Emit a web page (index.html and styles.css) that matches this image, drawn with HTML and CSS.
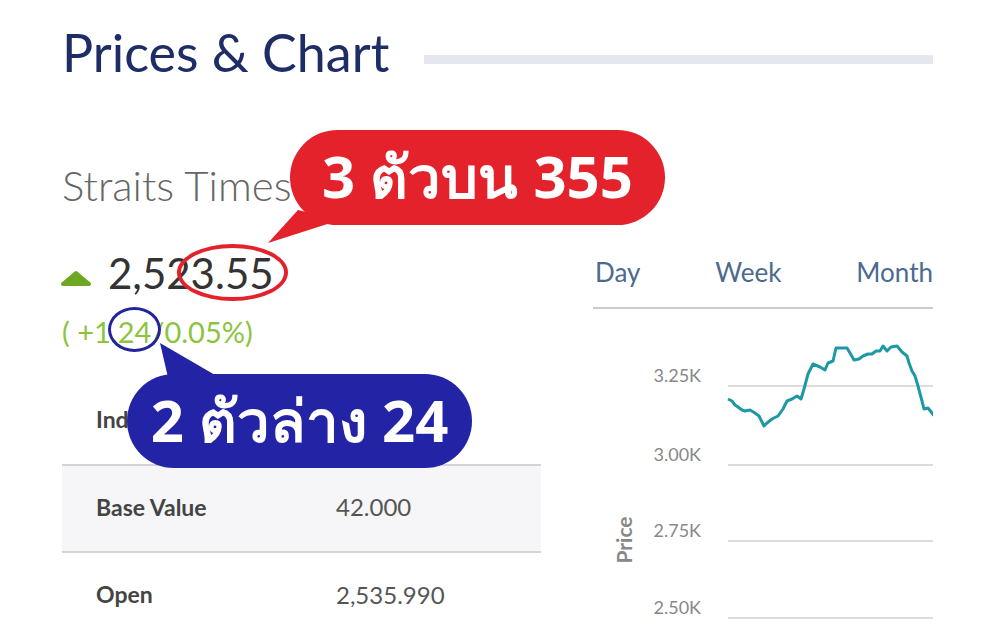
FILE: index.html
```html
<!DOCTYPE html>
<html lang="en">
<head>
  <meta charset="UTF-8">
  <meta name="viewport" content="width=device-width, initial-scale=1.0">
  <title>Prices &amp; Chart</title>
  <link rel="stylesheet" href="styles.css">
</head>
<body>
  <div class="page">
    <div class="title-row">
      <h1>Prices &amp; Chart</h1>
      <span class="rule"></span>
    </div>

    <div class="content">
      <div class="quote">
        <h2 class="index-name">Straits Times Index</h2>
        <div class="price">
          <svg class="up" width="32" height="16" viewBox="0 0 32 16">
            <polygon points="3,14 16,3 29,14" fill="#6ea722" stroke="#6ea722" stroke-width="4" stroke-linejoin="round"/>
          </svg>
          <span>2,523.55</span>
        </div>
        <div class="change">( +1.24/0.05%)</div>

        <table class="stats">
          <tr>
            <th>Index Currency</th>
            <td>SGD</td>
          </tr>
          <tr class="shaded">
            <th>Base Value</th>
            <td>42.000</td>
          </tr>
          <tr>
            <th>Open</th>
            <td>2,535.990</td>
          </tr>
        </table>
      </div>

      <div class="chart-panel">
        <div class="tabs">
          <span>Day</span>
          <span>Week</span>
          <span>Month</span>
        </div>
        <svg class="chart" width="340" height="335" viewBox="0 0 340 335">
          <line x1="135" y1="77" x2="340" y2="77" class="grid"/>
          <line x1="135" y1="156" x2="340" y2="156" class="grid"/>
          <line x1="135" y1="232" x2="340" y2="232" class="grid"/>
          <line x1="135" y1="309" x2="340" y2="309" class="grid"/>
          <text x="108" y="73" class="tick">3.25K</text>
          <text x="108" y="152" class="tick">3.00K</text>
          <text x="108" y="228" class="tick">2.75K</text>
          <text x="108" y="305" class="tick">2.50K</text>
          <text class="axis" transform="translate(39 231) rotate(-90)">Price</text>
          <polyline class="series" points="135,90 139,92 142,96 145,98 149,101 152,102 157,101 162,104 166,107 171,117 174,114 179,110 185,107 190,100 194,92 199,90 204,87 208,90 211,80 215,65 220,55 227,58 232,61 235,54 240,52 243,39 249,39 254,39 257,44 261,51 266,50 270,47 275,45 279,45 283,42 287,42 290,37 294,42 298,38 304,37 309,43 314,47 316,54 319,62 322,67 325,77 329,92 331,100 335,99 339,104 342,108"/>
        </svg>
      </div>
    </div>

    <!-- annotations drawn over the screenshot -->
    <svg class="tails" width="994" height="643" viewBox="0 0 994 643">
      <polygon points="268,243 298,210 340,220" fill="#e3222b"/>
      <polygon points="160,343 170,386 234,386" fill="#2323a6"/>
    </svg>
    <div class="ring ring-red"></div>
    <div class="ring ring-blue"></div>
    <div class="callout callout-red">3 ตัวบน 355</div>
    <div class="callout callout-blue">2 ตัวล่าง 24</div>
  </div>
</body>
</html>
```

FILE: styles.css
```css
* {
  margin: 0;
  padding: 0;
  box-sizing: border-box;
}
body {
  background-color: #fff;
  font-family: Lato, "Open Sans", sans-serif;
}
.page {
  position: relative;
  width: 994px;
  height: 643px;
  overflow: hidden;
  padding: 21px 61px 0 62px;
}
.title-row {
  display: flex;
  align-items: center;
}
.title-row h1 {
  font-size: 52px;
  font-weight: 400;
  line-height: 62px;
  color: #1f2d66;
}
.rule {
  flex: 1;
  height: 9px;
  margin: 14px 0 0 35px;
  background-color: #e5e7ee;
}
.content {
  display: flex;
  gap: 52px;
  margin-top: 74px;
}
.quote {
  width: 479px;
}
.index-name {
  margin-top: 6px;
  font-size: 42px;
  font-weight: 300;
  line-height: 44px;
  color: #666;
  white-space: nowrap;
}
.price {
  display: flex;
  align-items: center;
  gap: 16px;
  margin-top: 42px;
  font-size: 42px;
  line-height: 48px;
  color: #333;
}
.up {
  margin-left: -2px;
  margin-top: 10px;
}
.change {
  margin-top: 19px;
  font-size: 29px;
  line-height: 32px;
  color: #8cc43f;
}
.stats {
  width: 100%;
  margin-top: 30px;
  border-collapse: collapse;
}
.stats tr {
  height: 87px;
  border-bottom: 2px solid #d3d3d8;
}
.stats tr:last-child {
  border-bottom: none;
}
.stats .shaded {
  background-color: #f6f6f8;
}
.stats th {
  width: 274px;
  padding-left: 34px;
  padding-bottom: 4px;
  text-align: left;
  font-size: 23px;
  font-weight: 700;
  color: #444;
}
.stats td {
  padding-bottom: 4px;
  font-size: 24px;
  color: #555;
}
.chart-panel {
  width: 340px;
  margin-top: 98px;
}
.tabs {
  display: flex;
  justify-content: space-between;
  padding: 0 0 0 2px;
  height: 54px;
  border-bottom: 2px solid #c9cbd0;
  font-size: 26px;
  line-height: 34px;
  color: #4b6a8e;
}
.chart {
  display: block;
}
.chart .grid {
  stroke: #dcdcdc;
  stroke-width: 2;
}
.chart .tick {
  font-family: Lato, sans-serif;
  font-size: 18px;
  fill: #888;
  text-anchor: end;
}
.chart .axis {
  font-family: Lato, sans-serif;
  font-size: 21px;
  font-weight: 700;
  fill: #888;
  text-anchor: middle;
}
.chart .series {
  fill: none;
  stroke: #1f98a6;
  stroke-width: 3;
  stroke-linejoin: round;
}
.tails {
  position: absolute;
  left: 0;
  top: 0;
  pointer-events: none;
}
.ring {
  position: absolute;
  border-radius: 50%;
}
.ring-red {
  left: 177px;
  top: 244px;
  width: 111px;
  height: 57px;
  border: 4px solid #e3222b;
}
.ring-blue {
  left: 108px;
  top: 307px;
  width: 53px;
  height: 45px;
  border: 3px solid #23239e;
}
.callout {
  position: absolute;
  display: flex;
  align-items: center;
  justify-content: center;
  border-radius: 48px;
  color: #fff;
  font-family: "Noto Sans", "DejaVu Sans", sans-serif;
  font-size: 58px;
  font-weight: 700;
  white-space: nowrap;
}
.callout-red {
  left: 290px;
  top: 130px;
  width: 375px;
  height: 95px;
  background-color: #e3222b;
}
.callout-blue {
  left: 127px;
  top: 374px;
  width: 345px;
  height: 94px;
  background-color: #2323a6;
}
```
